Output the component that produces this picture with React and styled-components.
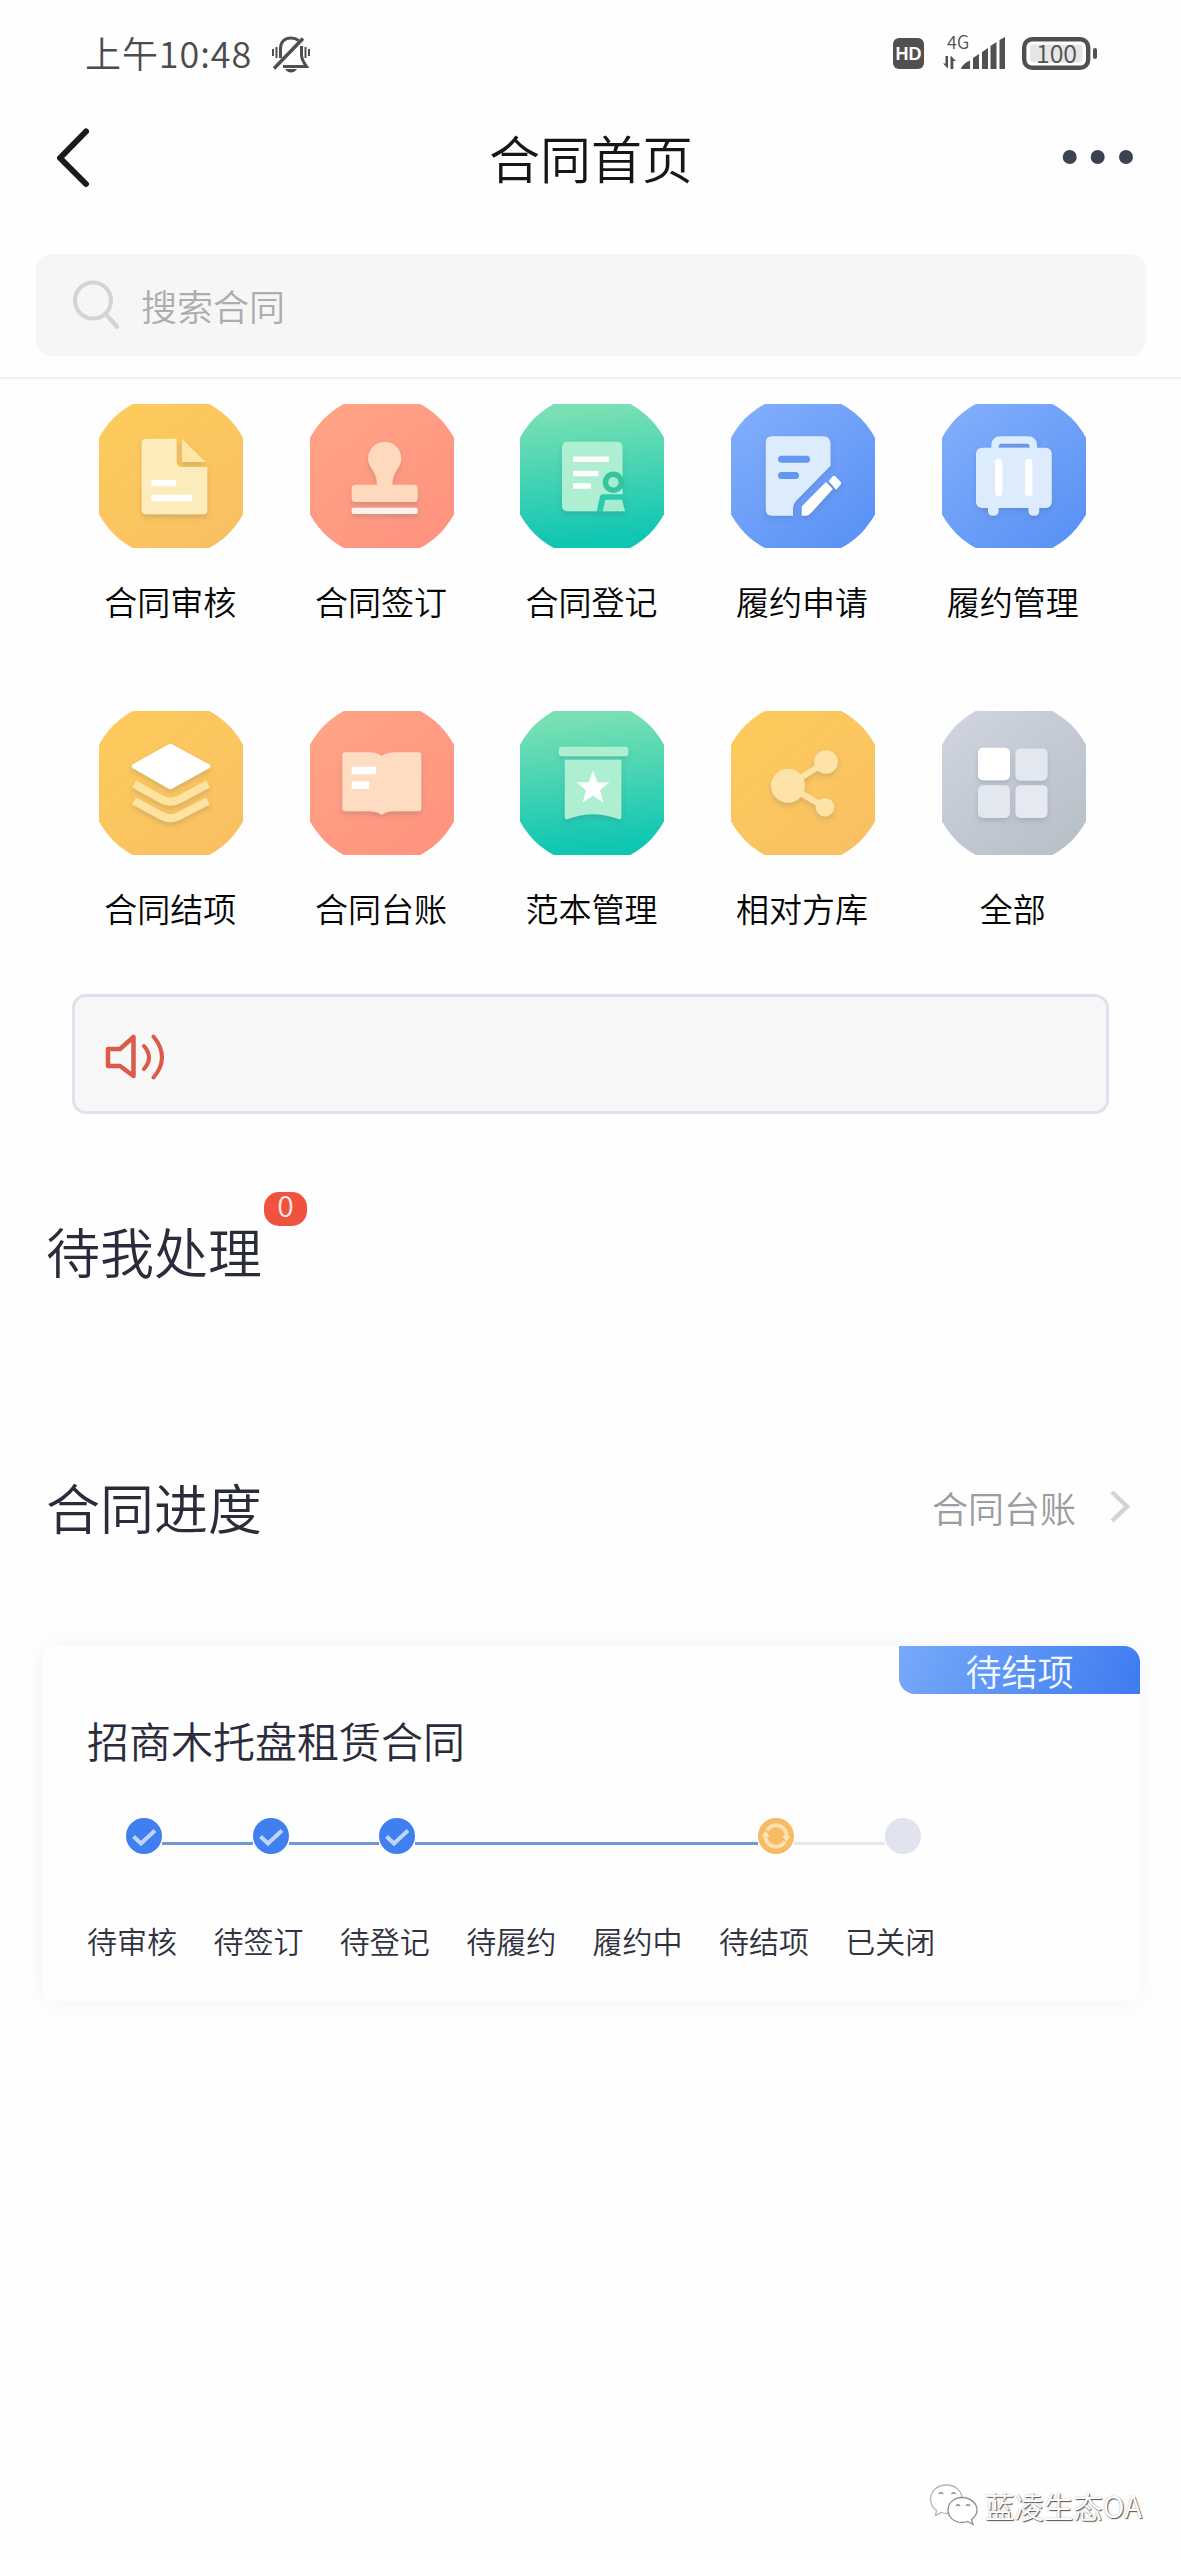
import React from "react";
import styled, { createGlobalStyle } from "styled-components";

const GlobalStyle = createGlobalStyle`
  * {
    box-sizing: border-box;
  }
  body {
    margin: 0;
    background: #fefefe;
    font-family: "Noto Sans CJK SC", "Noto Sans", sans-serif;
    font-weight: 350;
  }
  svg {
    display: block;
    flex-shrink: 0;
  }
`;

const Page = styled.div`
  width: 1181px;
  height: 2560px;
  display: flex;
  flex-direction: column;
  overflow: hidden;
`;

const StatusBar = styled.div`
  height: 107px;
  padding: 0 83px 0 85px;
  display: flex;
  align-items: center;
  color: #4c4c4c;

  & .time {
    width: 169px;
    font-size: 36px;
    line-height: 50px;
    letter-spacing: 0.9px;
    margin: 0 17px 4px 0;
    white-space: nowrap;
  }
  & .right {
    margin-left: auto;
    display: flex;
    align-items: center;
  }
`;

const Header = styled.div`
  height: 102px;
  padding: 0 48px 0 55px;
  display: flex;
  align-items: center;
  justify-content: space-between;

  & .title {
    font-size: 51px;
    line-height: 70px;
    color: #161616;
    padding: 0 0 3px 29px;
  }
`;

const SearchArea = styled.div`
  padding: 45px 35px 21px 36px;
  border-bottom: 2px solid #f1f1f2;
`;

const SearchBox = styled.div`
  height: 102px;
  padding-left: 35px;
  border-radius: 16px;
  background: #f6f6f7;
  display: flex;
  align-items: center;
  gap: 20px;
  font-size: 36px;
  line-height: 50px;
  color: #adadad;
`;

const Menu = styled.div`
  padding: 25px 62px 0 66px;
  display: grid;
  grid-template-columns: repeat(5, 1fr);
  grid-auto-rows: 307px;
`;

const MenuItem = styled.div`
  display: flex;
  flex-direction: column;
  align-items: center;

  & .label {
    margin-top: 29px;
    padding-right: 2px;
    font-size: 33px;
    line-height: 48px;
    color: #050505;
  }
`;

const Notice = styled.div`
  height: 120px;
  margin: -24px 72px 0;
  padding: 5px 0 0 29px;
  border: 3px solid #dfe2ec;
  border-radius: 14px;
  background: #f7f7f8;
  display: flex;
  align-items: center;
`;

const Section = styled.div`
  display: flex;
  align-items: center;
  margin-top: ${props => props.$top}px;
  padding: 0 49px 0 46px;

  & .name {
    position: relative;
    font-size: 54px;
    line-height: 76px;
    color: #2a2c3b;
  }
  & .more {
    margin-left: auto;
    display: flex;
    align-items: center;
    gap: 32px;
    font-size: 36px;
    line-height: 50px;
    color: #9b9ba1;
  }
`;

const Badge = styled.span`
  position: absolute;
  left: 218px;
  top: -21px;
  width: 43px;
  height: 34px;
  border-radius: 15px;
  background: #f0523e;
  color: #ffe9e2;
  font-size: 30px;
  line-height: 25px;
  text-align: center;
`;

const Card = styled.div`
  height: 355px;
  margin: 101px 41px 0 42px;
  border-radius: 14px;
  background: #fefefe;
  box-shadow: 0 0 20px rgba(110, 150, 210, 0.1);

  & .title {
    margin-top: 17px;
    padding-left: 45px;
    font-size: 42px;
    line-height: 58px;
    color: #2a2c3b;
  }
`;

const Tag = styled.div`
  width: 241px;
  height: 48px;
  margin-left: auto;
  border-radius: 0 16px 0 16px;
  background: linear-gradient(115deg, #78aafa 0%, #3d7bf0 100%);
  color: #f4f9ff;
  font-size: 36px;
  line-height: 48px;
  text-align: center;
`;

const Steps = styled.div`
  display: flex;
  margin: 49px 0 0 45px;
`;

const Step = styled.div`
  width: 126.4px;
  font-size: 30px;
  color: #30323e;

  & .track {
    display: flex;
    align-items: center;
    height: 36px;
  }
  & .text {
    margin-top: 65px;
    line-height: 42px;
  }
`;

const Line = styled.i`
  width: ${props => props.$width}px;
  height: 3px;
  flex-shrink: 0;
  position: relative;
  top: 7px;
  background: ${props => props.$color};
`;

const Watermark = styled.div`
  margin-top: auto;
  padding: 0 39px 34px 0;
  display: flex;
  justify-content: flex-end;
  align-items: center;
  gap: 6px;
  font-size: 29.5px;
  line-height: 42px;
  color: #fff;
  text-shadow: 1px 1px 1px #555, 0 0 2px #bbb;
`;

const tones = {
  yellow: ["#fdcb5c", "#f9c062"],
  orange: ["#ffa386", "#ff937f"],
  green: ["#78e0b3", "#0fc6b3"],
  blue: ["#80adfb", "#5a92f6"],
  gray: ["#ced3de", "#b8c0ca"],
};

const Glyph = ({ type }) => {
  switch (type) {
    case "audit":
      return (
        <>
          <path d="M47 34.7H77.7V57q0 6 6 6H108.3V106q0 4.3-4.3 4.3H47q-4.3 0-4.3-4.3V39q0-4.3 4.3-4.3z" fill="#fdecbc" />
          <path d="M83 35L106.7 58H83z" fill="#ffe6a5" />
          <rect x="52.3" y="75.7" width="25" height="6.6" rx="1" fill="#fff" />
          <rect x="52.3" y="90.7" width="41" height="6.6" rx="1" fill="#fff" />
        </>
      );
    case "stamp":
      return (
        <>
          <path d="M74.7 38a16.3 16.3 0 0 1 14 25q-6.5 9-6.4 17.7H104q3.7 0 3.7 3.7V94.3q0 3.7-3.7 3.7H45.4q-3.7 0-3.7-3.7V84.4q0-3.7 3.7-3.7H67q.2-8.7-6.3-17.7a16.3 16.3 0 0 1 14-25z" fill="#fed9bd" />
          <rect x="41.7" y="103.7" width="66" height="6.3" rx="2" fill="#fff3ee" />
        </>
      );
    case "register":
      return (
        <>
          <rect x="42" y="37.7" width="60.6" height="69.6" rx="5" fill="#aeefd2" />
          <path d="M53 55.2H88.8M53 69.5H78.5M53 82H71" stroke="#fff" strokeWidth="5.6" />
          <circle cx="93.4" cy="78.3" r="10.7" fill="#35c49f" />
          <circle cx="93.4" cy="78.3" r="5.2" fill="#a5ecd0" />
          <path d="M82 90.3H104V108H76.5L80 92z" fill="#2ccbac" />
          <path d="M85.3 95.7H102L105 107.3H82.7z" fill="#a5ecd0" />
        </>
      );
    case "apply":
      return (
        <>
          <path d="M41 32.3H92q7.5 0 7.5 7.5V61.7L65 97q-3 3-3 7V111.7H41q-6.2 0-6.2-6.2V38.5q0-6.2 6.2-6.2z" fill="#dcecfd" />
          <path d="M50.5 55.3H75.5M50.5 71.6H64.5" stroke="#6398ee" strokeWidth="7" strokeLinecap="round" />
          <path d="M70.8 111.7V102.3L95 78L101.8 85L81 108q-3 3.7-6 3.7z" fill="#fff" />
          <path d="M97.6 77L101.5 72.5q1.5-1.5 3 0L109.5 77.7q1.5 1.5 0 3L105.2 85.7z" fill="#fff" />
        </>
      );
    case "manage":
      return (
        <>
          <path d="M53 48V42q0-6 6-6H85.3q6 0 6 6V48" fill="none" stroke="#dcecfd" strokeWidth="7.5" />
          <path d="M46 100H56.6V107q0 4.7-5.3 4.7T46 107zM86.5 100H97.2V107q0 4.7-5.3 4.7T86.5 107z" fill="#dcecfd" />
          <rect x="34" y="43.7" width="75.8" height="60.3" rx="6" fill="#dcecfd" />
          <path d="M56.7 58.5V88.5M86.7 58.5V88.5" stroke="#fff" strokeWidth="7.5" strokeLinecap="round" />
        </>
      );
    case "finish":
      return (
        <>
          <path d="M71.3 35L109 55.3L71.3 76L35 55.3z" fill="#fff" stroke="#fff" strokeWidth="4.5" strokeLinejoin="round" />
          <path d="M35 73L63 88.5Q71.5 93 80 88.5L109 73M35 90L63 105Q71.5 109.5 80 105L109 90" fill="none" stroke="#fee2a0" strokeWidth="8" />
        </>
      );
    case "ledger":
      return (
        <>
          <path d="M35 41.3H59Q67 41.3 71.7 45Q77 41.3 85 41.3H108.5Q111.3 41.3 111.3 44V97.6Q111.3 100.3 108.5 100.3H84Q76 100.3 71.7 104Q67 100.3 59 100.3H35Q32.3 100.3 32.3 97.6V44Q32.3 41.3 35 41.3z" fill="#fedcc2" />
          <rect x="41.7" y="55.7" width="24.3" height="7.6" rx="1" fill="#fff" />
          <rect x="41.7" y="70.3" width="17.6" height="7.7" rx="1" fill="#fff" />
        </>
      );
    case "template":
      return (
        <>
          <rect x="38.7" y="35.7" width="69.6" height="9.6" rx="3" fill="#aeefd2" />
          <path d="M44.8 48.7H101.4V106q0 3-3 1.9Q73 98.5 48 107.9q-3.2 1.1-3.2-1.9z" fill="#aeefd2" />
          <path d="M73 59.5L77.4 71.2H89.5L80 79.2L83.3 91.5L73 84.5L62.7 91.5L66 79.2L56.5 71.2H68.6z" fill="#fff" />
        </>
      );
    case "party":
      return (
        <>
          <path d="M57 74.7L95 51M57 74.7L94 96.3" stroke="#fee3a8" strokeWidth="6" />
          <circle cx="57" cy="74.7" r="17" fill="#fee3a8" />
          <circle cx="95" cy="51" r="11.8" fill="#fee3a8" />
          <circle cx="94" cy="96.3" r="9.2" fill="#fee3a8" />
        </>
      );
    default:
      return (
        <>
          <rect x="36" y="36.7" width="32" height="32.6" rx="5" fill="#fff" />
          <rect x="73.5" y="37.5" width="32" height="32.2" rx="5" fill="#e3e7f0" />
          <rect x="36" y="74.3" width="32" height="32.7" rx="5" fill="#e3e7f0" />
          <rect x="73.5" y="74.3" width="32" height="32.7" rx="5" fill="#e6e9f2" />
        </>
      );
  }
};

const MenuIcon = ({ type, tone }) => {
  const id = `${type}-${tone}`;
  return (
    <svg width="144" height="144" viewBox="0 0 144 144">
      <defs>
        <linearGradient id={id} x1={tone === "green" ? 0.4 : 0.1} y1="0" x2={tone === "green" ? 0.5 : 0.9} y2="1">
          <stop offset="0.1" stopColor={tones[tone][0]} />
          <stop offset="0.9" stopColor={tones[tone][1]} />
        </linearGradient>
        <filter id={`${id}-s`} x="-20%" y="-20%" width="140%" height="150%">
          <feDropShadow dx="0" dy="3" stdDeviation="2.5" floodColor="#40506a" floodOpacity="0.2" />
        </filter>
      </defs>
      <circle cx="72" cy="72" r="81.5" fill={`url(#${id})`} />
      <g filter={`url(#${id}-s)`}>
        <Glyph type={type} />
      </g>
    </svg>
  );
};

const menus = [
  { label: "合同审核", type: "audit", tone: "yellow" },
  { label: "合同签订", type: "stamp", tone: "orange" },
  { label: "合同登记", type: "register", tone: "green" },
  { label: "履约申请", type: "apply", tone: "blue" },
  { label: "履约管理", type: "manage", tone: "blue" },
  { label: "合同结项", type: "finish", tone: "yellow" },
  { label: "合同台账", type: "ledger", tone: "orange" },
  { label: "范本管理", type: "template", tone: "green" },
  { label: "相对方库", type: "party", tone: "yellow" },
  { label: "全部", type: "all", tone: "gray" },
];

const BLUE = "#6e9bd8";
const GRAY = "#e6e7ea";

const steps = [
  { text: "待审核", state: "done", after: BLUE },
  { text: "待签订", state: "done", before: BLUE, after: BLUE },
  { text: "待登记", state: "done", before: BLUE, after: BLUE },
  { text: "待履约", state: "none", before: BLUE, after: BLUE },
  { text: "履约中", state: "none", before: BLUE, after: BLUE },
  { text: "待结项", state: "current", before: BLUE, after: GRAY },
  { text: "已关闭", state: "closed", before: GRAY },
];

const Node = ({ state }) => {
  if (state === "done")
    return (
      <svg width="36" height="36" viewBox="0 0 36 36">
        <circle cx="18" cy="18" r="18" fill="#3f7ff0" />
        <path d="M7.5 18.5L15 25.5L29 12.5" fill="none" stroke="#bfd5fb" strokeWidth="4" />
      </svg>
    );
  if (state === "current")
    return (
      <svg width="36" height="36" viewBox="0 0 36 36">
        <circle cx="18" cy="18" r="18" fill="#f8ba62" />
        <path d="M9 12.5A10.5 10.5 0 0 1 28.5 19M27 23.5A10.5 10.5 0 0 1 7.5 17" fill="none" stroke="#fedfae" strokeWidth="4" />
        <path d="M24 18H32.5L28.5 23.5zM3.5 18.5H12L7.5 13z" fill="#fee6c0" />
      </svg>
    );
  return (
    <svg width="36" height="36" viewBox="0 0 36 36">
      <circle cx="18" cy="18" r="18" fill="#e1e4ef" />
    </svg>
  );
};

const BellOff = () => (
  <svg width="40" height="38" viewBox="0 0 40 38" fill="none" stroke="#4f4f4f" strokeWidth="3">
    <path d="M9.5 23V14C9.5 6.5 14 3 20 3q4.5 0 7.5 2.5M30.5 11V20q0 4.500 5 11.500H12" />
    <path d="M3 33.5L32 3.5" strokeWidth="3.5" />
    <path d="M14 34H26q-2.5 3.5-6 3.5T14 34z" fill="#4f4f4f" stroke="none" />
    <path d="M2 14V21M5.5 12V23M34.5 12V23M38 14V21" strokeWidth="2" />
  </svg>
);

const Signals = () => (
  <svg width="206" height="60" viewBox="892 24 206 60" fill="#505050">
    <rect x="893" y="38" width="31" height="31" rx="6" />
    <text x="908.5" y="60" textAnchor="middle" fontFamily="Liberation Sans" fontWeight="700" fontSize="18" fill="#fff">
      HD
    </text>
    <text x="947" y="48.5" fontFamily="Noto Sans CJK SC" fontSize="18">
      4G
    </text>
    <path d="M945.5 56h2.5v12.5l-5-5h2.5zM950.5 69V55.5l5.5 5.5h-2.7v8z" />
    <path d="M961 69q1-5 9-8.5V69zM973 58l6-4V69h-6zM982 52l6-4V69h-6zM990.5 46l6-4V69h-6zM999.5 40l5.5-3V69h-5.5z" />
    <rect x="1024.2" y="39.2" width="64" height="28.6" rx="8" fill="none" stroke="#505050" strokeWidth="4.4" />
    <rect x="1030" y="44.5" width="52.5" height="18" rx="3" fill="#e6e6e6" />
    <rect x="1093" y="48" width="4" height="11" rx="2" />
    <text x="1056.5" y="62.5" textAnchor="middle" fontFamily="Noto Sans CJK SC" fontSize="25">
      100
    </text>
  </svg>
);

const App = () => {
  return (
    <Page>
      <GlobalStyle />
      <StatusBar>
        <span className="time">上午10:48</span>
        <BellOff />
        <div className="right">
          <Signals />
        </div>
      </StatusBar>

      <Header>
        <svg width="36" height="60" viewBox="0 0 36 60">
          <path d="M31 3.5L5 30L31 56" fill="none" stroke="#1a1c1c" strokeWidth="6" strokeLinecap="round" strokeLinejoin="round" />
        </svg>
        <span className="title">合同首页</span>
        <svg width="71" height="16" viewBox="0 0 71 16" fill="#3a4350">
          <circle cx="7.7" cy="7" r="7" />
          <circle cx="35.7" cy="7" r="7" />
          <circle cx="64" cy="7" r="7" />
        </svg>
      </Header>

      <SearchArea>
        <SearchBox>
          <svg width="50" height="50" viewBox="0 0 50 50" fill="none" stroke="#d2d4d5" strokeLinecap="round">
            <circle cx="22" cy="20.5" r="18" strokeWidth="4" />
            <path d="M35 34.5L46 46.5" strokeWidth="4.5" />
          </svg>
          <span>搜索合同</span>
        </SearchBox>
      </SearchArea>

      <Menu>
        {menus.map(menu => (
          <MenuItem key={menu.label}>
            <MenuIcon type={menu.type} tone={menu.tone} />
            <div className="label">{menu.label}</div>
          </MenuItem>
        ))}
      </Menu>

      <Notice>
        <svg width="62" height="50" viewBox="104 1033 62 50" fill="none" stroke="#dd5a48" strokeWidth="4.5" strokeLinecap="round" strokeLinejoin="round">
          <path d="M108 1050H120L133.5 1038V1077L120 1067H108z" />
          <path d="M144 1047q10 11.5 0 23M153.5 1037.5q17 21 0 41" strokeWidth="4" />
        </svg>
      </Notice>

      <Section $top={99}>
        <div className="name">
          待我处理
          <Badge>0</Badge>
        </div>
      </Section>

      <Section $top={180}>
        <div className="name">合同进度</div>
        <div className="more">
          合同台账
          <svg width="24" height="36" viewBox="0 0 24 36">
            <path d="M4 3L19 17.5L4 32" fill="none" stroke="#d4d4d6" strokeWidth="4.5" />
          </svg>
        </div>
      </Section>

      <Card>
        <Tag>待结项</Tag>
        <div className="title">招商木托盘租赁合同</div>
        <Steps>
          {steps.map(step => (
            <Step key={step.text}>
              <div className="track">
                <Line $width={39.3} $color={step.before || "transparent"} />
                {step.state === "none" ? <Line $width={36} $color={BLUE} /> : <Node state={step.state} />}
                <Line $width={51.1} $color={step.after || "transparent"} />
              </div>
              <div className="text">{step.text}</div>
            </Step>
          ))}
        </Steps>
      </Card>

      <Watermark>
        <svg width="50" height="42" viewBox="0 0 50 42" fill="#fff" stroke="#8f8f8f" strokeWidth="1.3">
          <path d="M17.5 1C8.5 1 1.5 7 1.5 15q0 7 6 11.5L6.5 31.5L12.5 28.5q2.5 1 6 1C27 29.5 33 23 33 15S26.5 1 17.5 1z" stroke="#b5b5b5" />
          <path d="M33 13.5C25 13.5 19 19 19 26S25 38.5 33 38.5q3 0 5.5-1L44 40.5L42.5 35.5Q48 31.5 48 26C48 19 41 13.5 33 13.5z" />
          <path d="M10 10q2-2.5 4 0M22.5 10q2-2.5 4 0M27 22q2-2.5 4 0M37 22q2-2.5 4 0" fill="none" />
        </svg>
        <span>蓝凌生态OA</span>
      </Watermark>
    </Page>
  );
};

export default App;
